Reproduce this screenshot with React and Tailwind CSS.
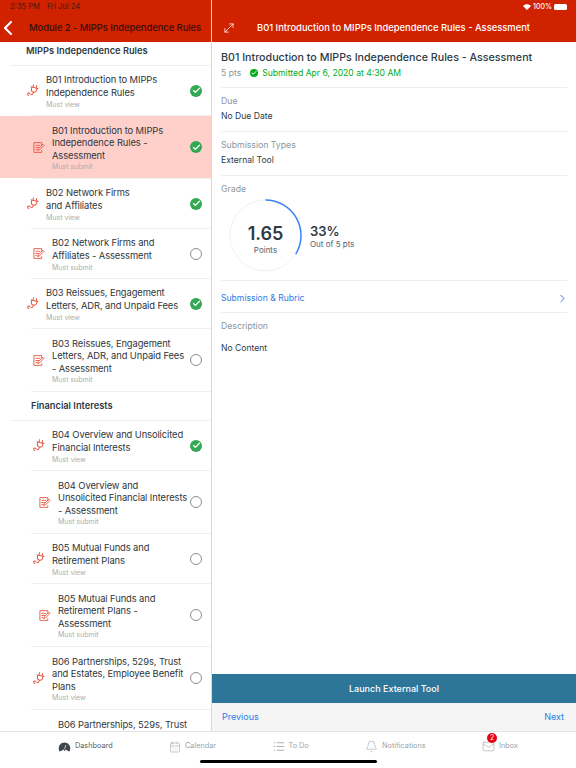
import React from "react";
import { Bell, CalendarDays, Check, ChevronLeft, ChevronRight, Mail, MoveDiagonal } from "lucide-react";

const sectionOne = [
  { title: "B01 Introduction to MIPPs\nIndependence Rules", type: "view", done: true },
  { title: "B01 Introduction to MIPPs\nIndependence Rules -\nAssessment", type: "submit", done: true, active: true },
  { title: "B02 Network Firms\nand Affiliates", type: "view", done: true },
  { title: "B02 Network Firms and\nAffiliates - Assessment", type: "submit" },
  { title: "B03 Reissues, Engagement\nLetters, ADR, and Unpaid Fees", type: "view", done: true },
  { title: "B03 Reissues, Engagement\nLetters, ADR, and Unpaid Fees\n- Assessment", type: "submit" },
];

const sectionTwo = [
  { title: "B04 Overview and Unsolicited\nFinancial Interests", type: "view", done: true },
  { title: "B04 Overview and\nUnsolicited Financial Interests\n- Assessment", type: "submit" },
  { title: "B05 Mutual Funds and\nRetirement Plans", type: "view" },
  { title: "B05 Mutual Funds and\nRetirement Plans -\nAssessment", type: "submit" },
  { title: "B06 Partnerships, 529s, Trust\nand Estates, Employee Benefit\nPlans", type: "view" },
  { title: "B06 Partnerships, 529s, Trust\nand Estates, Employee Benefit\nPlans - Assessment", type: "submit" },
];

const PlugIcon = ({ className }) => (
  <svg viewBox="0 0 24 24" fill="none" stroke="#e8503a" strokeWidth="1.7" strokeLinecap="round" strokeLinejoin="round" className={className}>
    <g transform="rotate(14 12 12)">
      <path d="M9.500 1.500v5M15.500 1.500v5" />
      <path d="M6 6.500h13" />
      <path d="M7.500 6.500v3.500a5 5 0 0 0 10 0V6.500" />
      <path d="M12.500 15v2.500c0 2.500-3 3-5 1.800s-4.500-.8-4.500 1.200 2 2.500 3 2.500" />
    </g>
  </svg>
);

const AssessmentIcon = ({ className }) => (
  <svg viewBox="0 0 24 24" fill="none" stroke="#e8503a" strokeWidth="1.6" strokeLinecap="round" strokeLinejoin="round" className={className}>
    <path d="M18 8V3H3.500v18H18v-3" />
    <path d="M7 8h7M7 12h5M7 16h2.500" />
    <path d="m11 17 .8-3L20 5.800l2.200 2.200-8.200 8.200z" />
  </svg>
);

const Status = ({ done }) =>
  done ? (
    <div className="w-[12px] h-[12px] rounded-full bg-[#34a853] flex items-center justify-center shrink-0">
      <Check size={9} color="white" strokeWidth={3.5} />
    </div>
  ) : (
    <div className="w-[12px] h-[12px] rounded-full border-[1.5px] border-[#8e8e93] shrink-0" />
  );

const ModuleRow = ({ item, indent }) => {
  const isSubmit = item.type === "submit";
  const lines = item.title.split("\n").length;
  return (
    <>
      <div className={`flex items-center pr-[9px] ${item.active ? "bg-[#ffcfca]" : ""} ${lines === 3 ? "h-[62px]" : "h-[49px]"}`}>
        <div className={`flex items-center flex-1 min-w-0 ${indent ? (isSubmit ? "pl-[38px]" : "pl-[33px]") : isSubmit ? "pl-[32px]" : "pl-[27px]"}`}>
          {isSubmit ? (
            <AssessmentIcon className="w-[13px] h-[13px] mr-[7px] shrink-0" />
          ) : (
            <PlugIcon className="w-[13px] h-[13px] mr-[6px] shrink-0" />
          )}
          <div className="min-w-0 pt-[3px]">
            <div className="text-[9.4px] leading-[12.6px] text-[#2f363b] whitespace-pre-line tracking-[-0.1px]">{item.title}</div>
            <div className="text-[7px] leading-[10px] text-[#a5afb5]">{isSubmit ? "Must submit" : "Must view"}</div>
          </div>
        </div>
        <Status done={item.done} />
      </div>
      <div className="ml-[31px] h-[1px] bg-[#efefef]" />
    </>
  );
};

const Field = ({ label, value }) => (
  <div className="pt-[7px] pb-[8px] border-b border-[#eeeeee]">
    <div className="text-[8.7px] leading-[13px] text-[#8b969e]">{label}</div>
    <div className="text-[8.6px] leading-[13px] text-[#2d3b45] mt-[2px]">{value}</div>
  </div>
);

const Tab = ({ icon, label, dark }) => (
  <div className="h-[13px] flex items-center gap-[4px]">
    {icon}
    <span className={`text-[7.3px] ${dark ? "text-[#55606a]" : "text-[#9aa3a9]"}`}>{label}</span>
  </div>
);

const GaugeIcon = () => (
  <svg viewBox="0 0 26 20" className="w-[13px] h-[10px]" fill="#3f474d">
    <path d="M3 19C-1 12 3 1 13 1s14 11 10 18l-4-1.500-3.500-2.500h-5L7 17.500z" />
    <path d="M12.500 15 16 6" stroke="white" strokeWidth="1.500" />
    <circle cx="13" cy="15.500" r="2" />
  </svg>
);

const TodoIcon = () => (
  <svg viewBox="0 0 16 14" className="w-[12px] h-[11px]" fill="none" stroke="#8f989e" strokeWidth="1">
    <path d="M1 2h2M1 7h2M1 12h2M5 2h10M5 7h10M5 12h10" />
  </svg>
);

export default function App() {
  return (
    <div className="relative w-[576px] h-[768px] overflow-hidden bg-white flex flex-col font-['Inter',sans-serif]">
      <div className="flex flex-1 min-h-0">
        {/* Module list */}
        <div className="w-[212px] shrink-0 border-r border-[#d8d8d8] flex flex-col">
          <div className="h-[42px] bg-[#d12200] shrink-0">
            <div className="h-[14px] pl-[10px] pt-[2px] flex gap-[7px] text-[7.5px] leading-[10px] text-[#5a1d10] font-medium">
              <span>2:35 PM</span>
              <span>Fri Jul 24</span>
            </div>
            <div className="flex items-center h-[28px]">
              <ChevronLeft size={24} color="white" strokeWidth={2.2} className="-ml-[4px]" />
              <span className="ml-[9px] text-[9.5px] font-medium text-[#3a0f06] whitespace-nowrap tracking-[-0.1px]">Module 2 - MIPPs Independence Rules</span>
            </div>
          </div>
          <div className="flex-1 min-h-0 overflow-hidden">
            <div className="pl-[26px] pt-[2px] pb-[7px] text-[9.25px] leading-[14px] font-semibold text-[#2d3b45]">MIPPs Independence Rules</div>
            <div className="ml-[10px] h-[1px] bg-[#efefef]" />
            {sectionOne.map((item) => (
              <ModuleRow key={item.title} item={item} />
            ))}
            <div className="pl-[31px] pt-[7px] pb-[7px] text-[9.25px] leading-[14px] font-semibold text-[#2d3b45]">Financial Interests</div>
            <div className="ml-[10px] h-[1px] bg-[#efefef]" />
            {sectionTwo.map((item) => (
              <ModuleRow key={item.title} item={item} indent />
            ))}
          </div>
        </div>

        {/* Assessment details */}
        <div className="flex-1 min-w-0 flex flex-col">
          <div className="h-[42px] bg-[#d12200] shrink-0">
            <div className="h-[14px] pr-[9px] flex items-center justify-end gap-[2px] text-[7px] text-white font-medium">
              <svg viewBox="0 0 16 12" className="w-[8px] h-[6px]" fill="white">
                <path d="M8 12 0 4c4.500-4.500 11.500-4.500 16 0z" />
              </svg>
              <span>100%</span>
              <div className="w-[13px] h-[6px] rounded-[1.5px] bg-white" />
            </div>
            <div className="h-[28px] flex items-center">
              <MoveDiagonal size={14} color="white" strokeWidth={1.3} className="ml-[10px]" />
              <span className="ml-[21px] text-[9.4px] font-medium text-white whitespace-nowrap">B01 Introduction to MIPPs Independence Rules - Assessment</span>
            </div>
          </div>

          <div className="flex-1 min-h-0 px-[9px]">
            <div className="pt-[8px] pb-[8px] border-b border-[#eeeeee]">
              <div className="text-[10.7px] leading-[16px] font-medium text-[#2d3b45] whitespace-nowrap">B01 Introduction to MIPPs Independence Rules - Assessment</div>
              <div className="flex items-center text-[8.6px] leading-[12px] mt-[1px]">
                <span className="text-[#8b969e]">5 pts</span>
                <div className="ml-[9px] w-[8px] h-[8px] rounded-full bg-[#00ac18] flex items-center justify-center">
                  <Check size={6} color="white" strokeWidth={4} />
                </div>
                <span className="ml-[4px] text-[#00ac18]">Submitted Apr 6, 2020 at 4:30 AM</span>
              </div>
            </div>
            <Field label="Due" value="No Due Date" />
            <Field label="Submission Types" value="External Tool" />

            <div className="pt-[7px] pb-[8px] border-b border-[#eeeeee]">
              <div className="text-[8.7px] leading-[13px] text-[#8b969e]">Grade</div>
              <div className="flex items-center mt-[3px] ml-[8px]">
                <div className="relative w-[73px] h-[73px] pt-[8px] flex flex-col items-center justify-center">
                  <svg viewBox="0 0 73 73" className="absolute inset-0 w-[73px] h-[73px]" fill="none">
                    <circle cx="36.500" cy="36.500" r="35.500" stroke="#f0f1f2" strokeWidth="1" />
                    <path d="M36.500 1A35.500 35.500 0 0 1 66.800 55" stroke="#3b82f6" strokeWidth="1.500" />
                  </svg>
                  <div className="text-[18px] leading-[20px] font-semibold text-[#2d3b45]">1.65</div>
                  <div className="text-[8px] leading-[12px] text-[#55606a]">Points</div>
                </div>
                <div className="ml-[8px] mt-[2px]">
                  <div className="text-[13px] leading-[14px] font-semibold text-[#2d3b45]">33%</div>
                  <div className="text-[8px] leading-[12px] text-[#55606a]">Out of 5 pts</div>
                </div>
              </div>
            </div>

            <div className="h-[32px] pt-[3px] flex items-center justify-between border-b border-[#eeeeee]">
              <span className="text-[8.6px] text-[#2f7be5]">Submission & Rubric</span>
              <ChevronRight size={13} color="#2f7be5" strokeWidth={1.8} className="-mr-[2px]" />
            </div>
            <div className="pt-[7px] text-[8.7px] leading-[13px] text-[#8b969e]">Description</div>
            <div className="mt-[9px] text-[8.6px] leading-[13px] text-[#2d3b45]">No Content</div>
          </div>

          <div className="h-[29px] bg-[#2e7699] flex items-center justify-center text-[9px] font-medium text-white">Launch External Tool</div>
          <div className="h-[28px] bg-[#f5f5f5] flex items-center justify-between pl-[10px] pr-[12px] text-[9px] text-[#2f7be5]">
            <span>Previous</span>
            <span>Next</span>
          </div>
        </div>
      </div>

      {/* Tab bar */}
      <div className="h-[37px] shrink-0 border-t border-[#e3e3e3] bg-white flex items-start justify-between pt-[8px] px-[58px]">
        <Tab dark label="Dashboard" icon={<GaugeIcon />} />
        <Tab label="Calendar" icon={<CalendarDays size={12} color="#8f989e" strokeWidth={1} />} />
        <Tab label="To Do" icon={<TodoIcon />} />
        <Tab label="Notifications" icon={<Bell size={13} color="#8f989e" strokeWidth={1} />} />
        <div className="relative">
          <Tab label="Inbox" icon={<Mail size={13} color="#8f989e" strokeWidth={1} />} />
          <div className="absolute -top-[7px] left-[5px] w-[10px] h-[10px] rounded-full bg-[#e8000f] text-white text-[7px] leading-[10px] text-center">2</div>
        </div>
      </div>

      <div className="absolute left-[200px] bottom-[5px] w-[177px] h-[3px] rounded-full bg-black" />
    </div>
  );
}
